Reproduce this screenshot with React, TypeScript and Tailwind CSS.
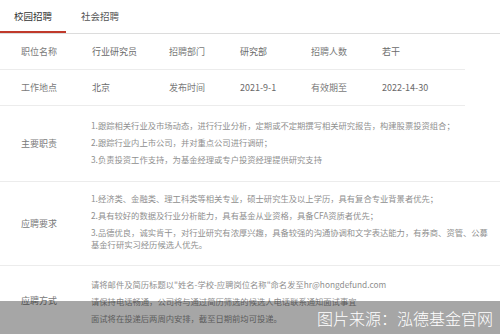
const font = { fontFamily: '"Noto Sans CJK SC", "Noto Sans", sans-serif' };

const duties = [
  '1.跟踪相关行业及市场动态，进行行业分析，定期或不定期撰写相关研究报告，构建股票投资组合；',
  '2.跟踪行业内上市公司，并对重点公司进行调研；',
  '3.负责投资工作支持，为基金经理或专户投资经理提供研究支持',
];

const requirements = [
  '1.经济类、金融类、理工科类等相关专业，硕士研究生及以上学历，具有复合专业背景者优先；',
  '2.具有较好的数据及行业分析能力，具有基金从业资格，具备CFA资质者优先；',
  '3.品德优良，诚实肯干，对行业研究有浓厚兴趣，具备较强的沟通协调和文字表达能力，有券商、资管、公募基金行研实习经历候选人优先。',
];

const apply = [
  '请将邮件及简历标题以"姓名-学校-应聘岗位名称"命名发至hr@hongdefund.com',
  '请保持电话畅通，公司将与通过简历筛选的候选人电话联系通知面试事宜',
  '面试将在投递后两周内安排，截至日期前均可投递。',
];

function InfoRow({ cells }: { cells: string[] }) {
  return (
    <div className="mr-[35px] grid h-[36px] grid-cols-[78px_70px_78px_64px_78px_1fr] items-center border-b border-[#ececec] text-[9px]">
      {cells.map((c, i) =>
        i % 2 === 0 ? (
          <div key={i} className="text-center text-[#7a7a7a]">
            {c}
          </div>
        ) : (
          <div key={i} className="pl-[14px] text-[#6a6a6a]">
            {c}
          </div>
        ),
      )}
    </div>
  );
}

function TextRow({ label, lines, h, pt }: { label: string; lines: string[]; h: string; pt: string }) {
  return (
    <div className={`flex border-b border-[#ececec] ${h}`}>
      <div className="flex w-[78px] shrink-0 items-center justify-center text-[9px] text-[#7a7a7a]">{label}</div>
      <div className={`ml-[13px] w-[403px] ${pt} flex flex-col gap-[5px] text-[8.3px] leading-[12px] text-[#8f8f8f]`}>
        {lines.map((l) => (
          <p key={l}>{l}</p>
        ))}
      </div>
    </div>
  );
}

export default function App() {
  return (
    <div className="relative h-[334px] w-[500px] overflow-hidden bg-white" style={font}>
      {/* tabs */}
      <div className="flex h-[34px] items-end border-b border-[#dcdcdc]">
        <div className="flex h-full w-[66px] items-center justify-center border-b-2 border-[#c0392b] pt-[1px] text-[9.5px] text-[#333]">
          校园招聘
        </div>
        <div className="flex h-full w-[68px] items-center justify-center text-[9.5px] text-[#555]">社会招聘</div>
      </div>

      <InfoRow cells={['职位名称', '行业研究员', '招聘部门', '研究部', '招聘人数', '若干']} />
      <InfoRow cells={['工作地点', '北京', '发布时间', '2021-9-1', '有效期至', '2022-14-30']} />

      <TextRow label="主要职责" lines={duties} h="h-[76px]" pt="pt-[13px]" />
      <TextRow label="应聘要求" lines={requirements} h="h-[84px]" pt="pt-[10px]" />
      <TextRow label="应聘方式" lines={apply} h="h-[70px]" pt="pt-[12px]" />

      {/* watermark band */}
      <div className="absolute bottom-0 left-0 flex h-[33px] w-full items-center justify-end bg-black/35 pr-[7px]">
        <span className="text-[16px] font-light text-white">图片来源：泓德基金官网</span>
      </div>
    </div>
  );
}
